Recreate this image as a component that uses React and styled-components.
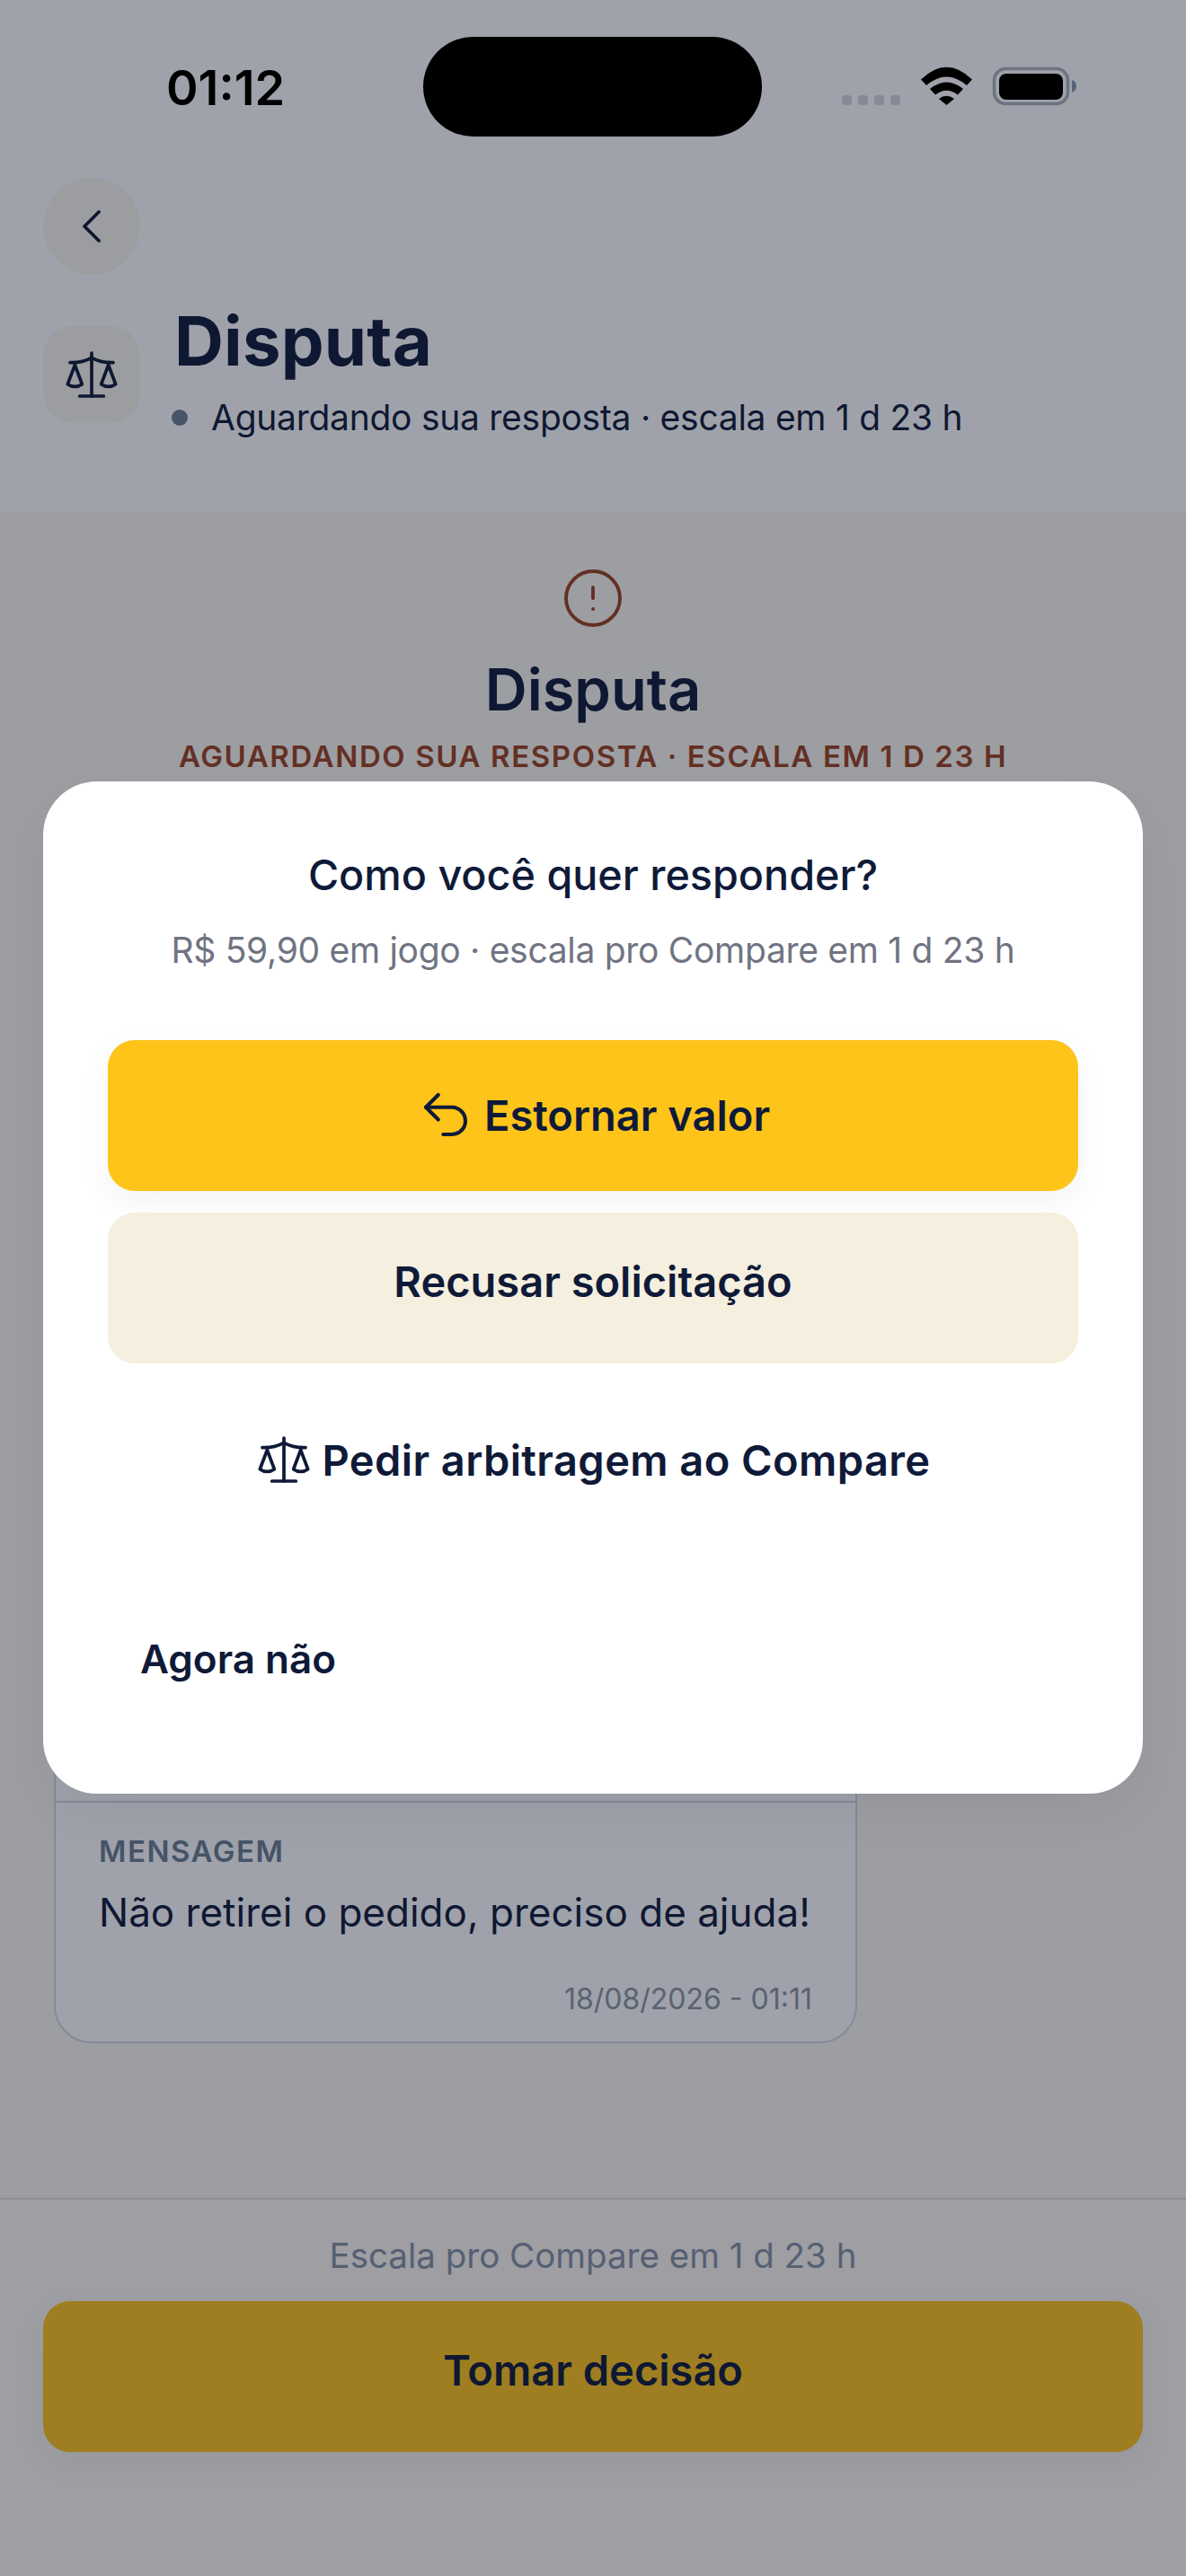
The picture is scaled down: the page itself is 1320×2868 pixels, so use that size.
import React from "react";
import styled, { createGlobalStyle } from "styled-components";
import { ChevronLeft, CircleAlert, Scale, Undo2 } from "lucide-react";

const Global = createGlobalStyle`
  html, body { margin: 0; padding: 0; background: #fcf8f2; }
  * { box-sizing: border-box; }
  body { font-family: "Inter", "Liberation Sans", sans-serif; color: #0f1a38; }
`;

const Page = styled.div`
  position: relative;
  width: 1320px;
  height: 2868px;
  overflow: hidden;
  display: flex;
  flex-direction: column;
  background: #fcf8f2;
`;

const Header = styled.header`
  height: 570px;
  flex: none;
  background: #fff;
  padding: 198px 48px 0;
`;

const BackButton = styled.button`
  width: 108px;
  height: 108px;
  border: 0;
  padding: 0;
  border-radius: 50%;
  background: #fbf7ee;
  color: #0f1a38;
  display: flex;
  align-items: center;
  justify-content: center;
`;

const TitleRow = styled.div`
  display: flex;
  align-items: flex-start;
  gap: 35px;
  margin-top: 57px;
`;

const IconTile = styled.div`
  width: 108px;
  height: 108px;
  border-radius: 33px;
  background: #fbf7ee;
  display: flex;
  align-items: center;
  justify-content: center;
  flex: none;
`;

const TitleBlock = styled.div`
  display: flex;
  flex-direction: column;
  margin-top: -30px;
`;

const PageTitle = styled.h1`
  margin: 0 0 0 3px;
  font-size: 76px;
  line-height: 92px;
  font-weight: 700;
  letter-spacing: 0.2px;
`;

const StatusLine = styled.div`
  display: flex;
  align-items: center;
  gap: 26px;
  margin-top: 12px;
  font-size: 39px;
  line-height: 56px;
  font-weight: 400;
  letter-spacing: -0.27px;
  white-space: nowrap;
`;

const Dot = styled.span`
  width: 18px;
  height: 18px;
  border-radius: 50%;
  background: #6b7f92;
  flex: none;
`;

const Body = styled.main`
  flex: 1;
  display: flex;
  flex-direction: column;
  position: relative;
  padding: 60px 60px 0;
`;

const Hero = styled.section`
  display: flex;
  flex-direction: column;
  align-items: center;
  color: #0f1a38;
`;

const HeroTitle = styled.h2`
  margin: 24px 0 0;
  font-size: 65px;
  line-height: 84px;
  font-weight: 600;
`;

const HeroTag = styled.div`
  margin-top: 10px;
  font-size: 33px;
  line-height: 44px;
  font-weight: 600;
  letter-spacing: 1.6px;
  color: #9c4220;
  white-space: nowrap;
`;

const MessageCard = styled.article`
  margin-top: 1036px;
  width: 894px;
  height: 375px;
  background: #fff;
  border: 2px solid #d6d8de;
  border-radius: 42px;
  display: flex;
  flex-direction: column;
`;

const CardTop = styled.div`
  height: 105px;
  flex: none;
  border-bottom: 2px solid #d6d8de;
`;

const CardBody = styled.div`
  padding: 33px 48px 0;
  display: flex;
  flex-direction: column;
`;

const MessageLabel = styled.div`
  font-size: 33px;
  line-height: 42px;
  font-weight: 600;
  letter-spacing: 1.5px;
  color: #6b7e92;
`;

const MessageText = styled.p`
  margin: 17px 0 0;
  font-size: 44px;
  line-height: 60px;
  white-space: nowrap;
`;

const MessageDate = styled.div`
  margin-top: 46px;
  text-align: right;
  font-size: 32px;
  line-height: 42px;
  color: #8c94a2;
`;

const Footer = styled.footer`
  position: absolute;
  left: 0;
  right: 0;
  bottom: 0;
  height: 421px;
  border-top: 2px solid #e4e0d8;
  padding: 26px 48px 0;
  background: #fdf9f3;
`;

const FooterNote = styled.div`
  text-align: center;
  font-size: 38.5px;
  line-height: 72px;
  color: #8591a5;
`;

const PrimaryButton = styled.button`
  width: 100%;
  height: 168px;
  border: 0;
  padding: 0 0 2px;
  border-radius: 30px;
  background: #fec419;
  color: #0f1a38;
  font: 600 47px "Inter", sans-serif;
  display: flex;
  align-items: center;
  justify-content: center;
  gap: 10px;
  box-shadow: 0 12px 36px rgba(15, 23, 42, 0.05);
`;

const FooterButton = styled(PrimaryButton)`
  margin-top: 15px;
  padding-bottom: 15px;
`;

const Scrim = styled.div`
  position: absolute;
  inset: 0;
  background: rgba(15, 23, 42, 0.4);
`;

const Sheet = styled.div`
  position: absolute;
  left: 48px;
  top: 870px;
  width: 1224px;
  height: 1127px;
  background: #fff;
  border-radius: 60px;
  padding: 71px 72px 0;
  display: flex;
  flex-direction: column;
  box-shadow: 0 24px 60px rgba(15, 23, 42, 0.05);
`;

const SheetTitle = styled.h3`
  margin: 0;
  text-align: center;
  font-size: 46.7px;
  line-height: 66px;
  font-weight: 500;
`;

const SheetSub = styled.p`
  margin: 21px 0 0;
  text-align: center;
  font-size: 39px;
  line-height: 60px;
  letter-spacing: -0.3px;
  color: #6f7482;
  white-space: nowrap;
`;

const Actions = styled.div`
  margin-top: 70px;
  display: flex;
  flex-direction: column;
  gap: 24px;
`;

const SecondaryButton = styled(PrimaryButton)`
  background: #f5efdf;
  box-shadow: none;
  padding-bottom: 15px;
`;

const GhostButton = styled(PrimaryButton)`
  background: transparent;
  box-shadow: none;
  letter-spacing: 0.4px;
`;

const DismissButton = styled.button`
  margin-top: 54px;
  width: 100%;
  height: 168px;
  padding: 0 36px 2px;
  text-align: left;
  border: 0;
  background: transparent;
  color: #0f1a38;
  font: 600 44px "Inter", sans-serif;
`;

const StatusBar = styled.div`
  position: absolute;
  inset: 0 0 auto 0;
  height: 160px;
`;

const Clock = styled.div`
  position: absolute;
  left: 185px;
  top: 66px;
  font: 600 54px/64px "Inter", sans-serif;
  color: #000;
`;

const Island = styled.div`
  position: absolute;
  left: 471px;
  top: 41px;
  width: 377px;
  height: 111px;
  border-radius: 56px;
  background: #000;
`;

const StatusIcons = styled.svg`
  position: absolute;
  left: 930px;
  top: 70px;
`;

const StatusGlyphs = () => (
  <StatusIcons width="275" height="52" viewBox="930 70 275 52">
    <g fill="#858a96">
      <rect x="937" y="106" width="11" height="11" rx="4" />
      <rect x="955" y="106" width="11" height="11" rx="4" />
      <rect x="973" y="106" width="11" height="11" rx="4" />
      <rect x="991" y="106" width="11" height="11" rx="4" />
    </g>
    <path d="M1025 88.500 Q1053.500 61 1082 88.500 L1076 95 Q1053.500 76 1031 95 Z" fill="#000" />
    <path d="M1035 99 Q1053.500 84 1072 99 L1066 105.500 Q1053.500 96 1041 105.500 Z" fill="#000" />
    <path d="M1045 110 Q1053.500 103.500 1062 110 L1053.500 117 Z" fill="#000" />
    <rect x="1106.500" y="76.500" width="82" height="39" rx="13" fill="none" stroke="#6e7381" strokeWidth="3.500" />
    <rect x="1112" y="82" width="71" height="29" rx="8" fill="#000" />
    <path d="M1193 89 Q1198 91 1198 96 Q1198 101 1193 103 Z" fill="#56627a" />
  </StatusIcons>
);

export default function App() {
  return (
    <Page>
      <Global />
      <Header>
        <BackButton aria-label="Voltar">
          <ChevronLeft size={64} strokeWidth={1.4} />
        </BackButton>
        <TitleRow>
          <IconTile>
            <Scale size={64} strokeWidth={1.4} color="#0f1a38" />
          </IconTile>
          <TitleBlock>
            <PageTitle>Disputa</PageTitle>
            <StatusLine>
              <Dot />
              Aguardando sua resposta · escala em 1 d 23 h
            </StatusLine>
          </TitleBlock>
        </TitleRow>
      </Header>
      <Body>
        <Hero>
          <CircleAlert size={72} strokeWidth={1.3} color="#9c4220" />
          <HeroTitle>Disputa</HeroTitle>
          <HeroTag>AGUARDANDO SUA RESPOSTA · ESCALA EM 1 D 23 H</HeroTag>
        </Hero>
        <MessageCard>
          <CardTop />
          <CardBody>
            <MessageLabel>MENSAGEM</MessageLabel>
            <MessageText>Não retirei o pedido, preciso de ajuda!</MessageText>
            <MessageDate>18/08/2026 - 01:11</MessageDate>
          </CardBody>
        </MessageCard>
      </Body>
      <Footer>
        <FooterNote>Escala pro Compare em 1 d 23 h</FooterNote>
        <FooterButton>Tomar decisão</FooterButton>
      </Footer>
      <Scrim />
      <Sheet>
        <SheetTitle>Como você quer responder?</SheetTitle>
        <SheetSub>R$ 59,90 em jogo · escala pro Compare em 1 d 23 h</SheetSub>
        <Actions>
          <PrimaryButton><Undo2 size={66} strokeWidth={1.5} />Estornar valor</PrimaryButton>
          <SecondaryButton>Recusar solicitação</SecondaryButton>
          <GhostButton><Scale size={64} strokeWidth={1.4} />Pedir arbitragem ao Compare</GhostButton>
        </Actions>
        <DismissButton>Agora não</DismissButton>
      </Sheet>
      <StatusBar>
        <Clock>01:12</Clock>
        <Island />
        <StatusGlyphs />
      </StatusBar>
    </Page>
  );
}
